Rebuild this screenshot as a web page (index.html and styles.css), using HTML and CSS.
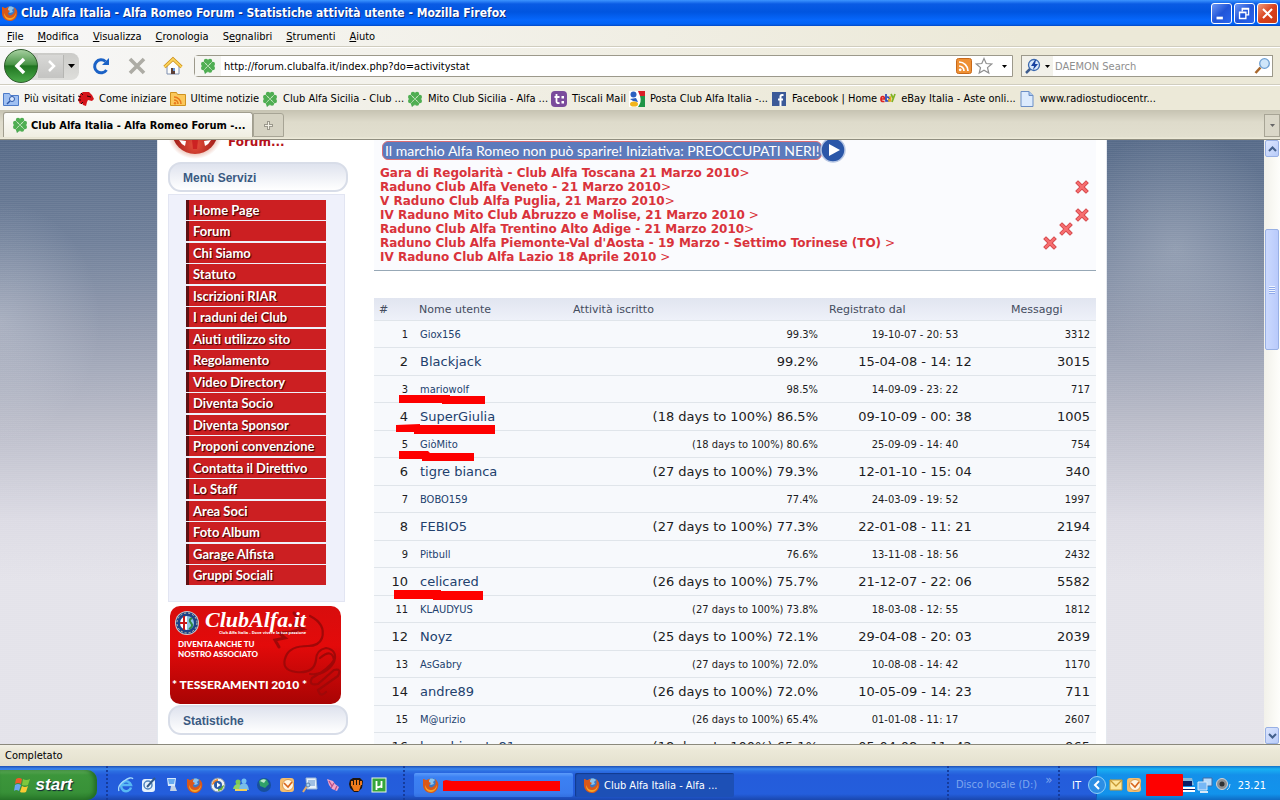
FILE: index.html
```html
<!DOCTYPE html>
<html lang="it">
<head>
    <meta charset="UTF-8">
    <meta name="viewport" content="width=device-width, initial-scale=1.0">
    <title>Club Alfa Italia - Alfa Romeo Forum - Statistiche attività utente</title>
    <link rel="stylesheet" href="styles.css">
</head>
<body>

    <!-- Shared icons -->
    <svg class="sprite" aria-hidden="true">
        <symbol id="firefox" viewBox="0 0 16 16">
            <circle cx="8.5" cy="7" r="6" fill="#3b78c4"/>
            <path d="M5 3c2-2 5-2 7 0l-2 2 1 2-3 1-3-2z" fill="#8cc4ee"/>
            <path d="M1 2c1 1 2 1 3 1 1-1 2-1 3-1-1 1-1 2-1 3l2 1-2 2c0 3 3 3 5 1 2-1 2-4 1-7 3 2 4 5 3 8-1 4-4 6-7 6-5 0-8-4-8-8 0-2 0-4 0-6z" fill="#d9581a"/>
            <path d="M2 8c1 3 3 5 6 5 3 0 5-2 6-5 0 4-3 7-6 7-4 0-6-3-6-7z" fill="#f7a526"/>
        </symbol>
        <symbol id="clover" viewBox="0 0 16 16">
            <path d="M8 8L5 15.500" stroke="#3f9a49" stroke-width="1.400" fill="none"/>
            <g fill="#4fae52">
                <circle cx="6" cy="3" r="2.200"/><circle cx="10" cy="3" r="2.200"/>
                <circle cx="6" cy="12.500" r="2.200"/><circle cx="10" cy="12.500" r="2.200"/>
                <circle cx="3.200" cy="6" r="2.200"/><circle cx="3.200" cy="10" r="2.200"/>
                <circle cx="12.800" cy="6" r="2.200"/><circle cx="12.800" cy="10" r="2.200"/>
                <path d="M5 4h6l-3 4zM5 12h6L8 8zM4 5v6l4-3zM12 5v6L8 8z"/>
            </g>
            <path d="M4 4l8 8M12 4l-8 8" stroke="#cdeac6" stroke-width=".6"/>
        </symbol>
        <symbol id="cross" viewBox="0 0 14 14">
            <path d="M3 3l8 8M11 3l-8 8" stroke="#d2474b" stroke-width="4" stroke-linecap="square"/>
            <path d="M3 3l8 8M11 3l-8 8" stroke="#f76e70" stroke-width="2.400" stroke-linecap="square"/>
        </symbol>
        <symbol id="outlook" viewBox="0 0 16 16">
            <rect x="1" y="1" width="14" height="14" rx="3" fill="#f6bd6c"/>
            <circle cx="9" cy="8" r="5.500" fill="#fff6e2" stroke="#d99a4c"/>
            <path d="M5 6l4 4 4-5" fill="none" stroke="#d8641a" stroke-width="1.600"/>
        </symbol>
    </svg>

    <header class="titlebar">
        <svg class="icon"><use href="#firefox"/></svg>
        <h1>Club Alfa Italia - Alfa Romeo Forum - Statistiche attività utente - Mozilla Firefox</h1>
        <div class="window-buttons">
            <button aria-label="Riduci a icona"><svg viewBox="0 0 21 21"><path d="M5 14h7v3H5z" fill="#fff"/></svg></button>
            <button aria-label="Ripristina"><svg viewBox="0 0 21 21"><path d="M8 8V5h7v7h-3M8 5.500h7M5 9h7v7H5zM5 9.500h7" fill="none" stroke="#fff" stroke-width="1.500"/></svg></button>
            <button class="close-window" aria-label="Chiudi"><svg viewBox="0 0 21 21"><path d="M5.500 5.500l10 10M15.500 5.500l-10 10" stroke="#fff" stroke-width="2.200"/></svg></button>
        </div>
    </header>

    <nav class="menubar">
        <a href="#"><u>F</u>ile</a>
        <a href="#"><u>M</u>odifica</a>
        <a href="#"><u>V</u>isualizza</a>
        <a href="#"><u>C</u>ronologia</a>
        <a href="#">S<u>e</u>gnalibri</a>
        <a href="#"><u>S</u>trumenti</a>
        <a href="#"><u>A</u>iuto</a>
    </nav>

    <div class="toolbar">
        <div class="history">
            <button class="back" aria-label="Indietro"><svg viewBox="0 0 32 32"><path d="M19 9l-7 7 7 7" fill="none" stroke="#fff" stroke-width="3.500"/></svg></button>
            <button class="forward" aria-label="Avanti"><svg viewBox="0 0 25 22"><path d="M11 6l5 5-5 5" fill="none" stroke="#fff" stroke-width="2.500"/></svg></button>
            <button class="recent" aria-label="Pagine recenti"><svg viewBox="0 0 7 4"><path d="M0 0h7L3.500 4z"/></svg></button>
        </div>
        <button class="tool" aria-label="Ricarica"><svg viewBox="0 0 20 20"><path d="M15.500 14a6.500 6.500 0 1 1-1-8.500" fill="none" stroke="#1b62c6" stroke-width="3"/><path d="M18 2v7h-7z" fill="#1b62c6"/></svg></button>
        <button class="tool" aria-label="Ferma"><svg viewBox="0 0 20 20"><path d="M3 3l14 14M17 3L3 17" stroke="#adaca5" stroke-width="3.600"/></svg></button>
        <button class="tool" aria-label="Pagina iniziale"><svg viewBox="0 0 20 20"><path d="M4 10v8h12v-8l-6-6z" fill="#fdfdfb" stroke="#7c8fb0"/><path d="M1.500 11L10 3l8.500 8" fill="none" stroke="#c98a12" stroke-width="3.200"/><path d="M1.500 11L10 3l8.500 8" fill="none" stroke="#fbd35a" stroke-width="1.800"/><path d="M8 12h4v6H8z" fill="#5c4038"/><path d="M10 12h2v3h-2z" fill="#6699dd"/></svg></button>
        <div class="urlbar">
            <span class="site"><svg class="icon"><use href="#clover"/></svg></span>
            <input type="text" value="http://forum.clubalfa.it/index.php?do=activitystat" aria-label="Indirizzo">
            <svg class="icon" viewBox="0 0 16 16"><rect x=".5" y=".5" width="15" height="15" rx="2" fill="#ee9034" stroke="#c8691a"/><path d="M3 4a9 9 0 0 1 9 9M3 8a5 5 0 0 1 5 5" fill="none" stroke="#fff" stroke-width="1.700"/><circle cx="4.200" cy="11.800" r="1.400" fill="#fff"/></svg>
            <svg class="star" viewBox="0 0 18 18"><path d="M9 1.500l2.200 5 5.500.5-4.200 3.600 1.300 5.400L9 13.200 4.200 16l1.300-5.400L1.300 7l5.500-.5z" fill="#fff" stroke="#8f8f8f" stroke-width="1.200"/></svg>
            <button aria-label="Cronologia indirizzi"><svg viewBox="0 0 5 3"><path d="M0 0h5L2.500 3z"/></svg></button>
        </div>
        <div class="search">
            <button class="engine" aria-label="Motore di ricerca"><svg class="icon" viewBox="0 0 16 16"><path d="M6 10l-5 5" stroke="#3e5d8e" stroke-width="2.500"/><circle cx="9" cy="7" r="5.500" fill="#d8e8fa" stroke="#3c69ae" stroke-width="1.300"/><path d="M10 2L6 8h3l-1 4 5-6h-3l1-4z" fill="#1641a0"/></svg><svg class="arrow" viewBox="0 0 5 3"><path d="M0 0h5L2.500 3z"/></svg></button>
            <input type="text" placeholder="DAEMON Search" aria-label="Cerca">
            <button aria-label="Avvia ricerca"><svg class="icon" viewBox="0 0 16 16"><path d="M6.500 9.500L1.500 15" stroke="#a8672c" stroke-width="2.600"/><circle cx="10.500" cy="5.500" r="4.800" fill="#cfe6fa" stroke="#6d9fd2" stroke-width="1.300"/></svg></button>
        </div>
    </div>

    <nav class="bookmarks">
        <a href="#"><svg class="icon" viewBox="0 0 16 16"><path d="M.5 2.500h6l1 2h8v10H.5z" fill="#9fc0f2" stroke="#4c7ac8"/><circle cx="9" cy="8" r="2.500" fill="#dceafd" stroke="#2c56a8"/><path d="M7 10l-3 3" stroke="#2c56a8" stroke-width="1.500"/></svg>Più visitati</a>
        <a href="#"><svg class="icon" viewBox="0 0 16 16"><path d="M2 3l3-2 6 0 3 3 2 4-2 2-4-1-1 2-1 4-3-1-1-2-2 1-1-2-1-2 1-2z" fill="#d5141a"/><path d="M0 5l3 1M0 9l3 0M3 13l2-2M9 5l4 1M3 2l2 2" stroke="#2a0505" stroke-width="1"/></svg>Come iniziare</a>
        <a href="#"><svg class="icon" viewBox="0 0 16 16"><path d="M.5 1.500h6l1 2h8v11H.5z" fill="#fbc85a" stroke="#cf9220"/><path d="M4 6a7 7 0 0 1 7 7M4 9a4 4 0 0 1 4 4" fill="none" stroke="#e8791d" stroke-width="1.600"/><circle cx="5" cy="12.200" r="1.200" fill="#e8791d"/></svg>Ultime notizie</a>
        <a href="#"><svg class="icon"><use href="#clover"/></svg>Club Alfa Sicilia - Club ...</a>
        <a href="#"><svg class="icon"><use href="#clover"/></svg>Mito Club Sicilia - Alfa ...</a>
        <a href="#"><svg class="icon" viewBox="0 0 16 16"><rect width="16" height="16" rx="4" fill="#7a4b9c"/><path d="M5.500 3v7.500q0 2 3 1.500M3.500 6h5" fill="none" stroke="#fff" stroke-width="1.800"/><path d="M10.500 5h2.500v2.500h-2.500zM10.500 10h2.500v2.500h-2.500z" fill="#fff"/></svg>Tiscali Mail</a>
        <a href="#"><svg class="icon" viewBox="0 0 16 16"><path d="M0 0h16v16H0z" fill="#fff"/><path d="M9 0h7v5h-5z" fill="#d91f26"/><path d="M11 5h5v11H9q4-5 2-11z" fill="#1f9547"/><circle cx="4.500" cy="3.500" r="3" fill="#2b5fc0"/><path d="M1 8l6-1 2 4-5-1z" fill="#2b5fc0"/><ellipse cx="5" cy="13" rx="4" ry="2.600" fill="#f2b51c"/></svg>Posta Club Alfa Italia -...</a>
        <a href="#"><svg class="icon" viewBox="0 0 16 16"><rect x="1" y="1" width="14" height="14" fill="#3b5998"/><path d="M12.500 4H11Q9.500 4 9.500 5.500V15M7 8.500h5" fill="none" stroke="#fff" stroke-width="2"/></svg>Facebook | Home</a>
        <a href="#"><svg class="icon" viewBox="0 0 16 16" fill="none" stroke-width="1.700"><path d="M1 8h3.500Q4.500 5.500 2.800 5.500T1 8t2 2.500h1.500" stroke="#d22"/><path d="M6 3v7h1.500Q9.500 10 9.500 8T7 6" stroke="#2743b8"/><path d="M9 8v2h1.500V6H9" stroke="#e4a91a"/><path d="M11 3l2 4M15 3l-3 8" stroke="#7eb324"/></svg>eBay Italia - Aste onli...</a>
        <a href="#"><svg class="icon" viewBox="0 0 16 16"><path d="M2 .500h8l4 4v11H2z" fill="#dcebfd" stroke="#6b8fc6"/><path d="M10 .500v4h4" fill="#a9c7ee" stroke="#6b8fc6"/></svg>www.radiostudiocentr...</a>
    </nav>

    <div class="tabs">
        <button class="tab"><svg class="icon"><use href="#clover"/></svg>Club Alfa Italia - Alfa Romeo Forum -...</button>
        <button class="new-tab" aria-label="Nuova scheda"><svg viewBox="0 0 9 9"><path d="M4.500 0v9M0 4.500h9" stroke="#9b988c" stroke-width="3"/><path d="M4.500 1v7M1 4.500h7" stroke="#f3f1e6" stroke-width="1"/></svg></button>
        <button class="all-tabs" aria-label="Elenca tutte le schede"><svg viewBox="0 0 5 3"><path d="M0 0h5L2.500 3z" fill="#666"/></svg></button>
    </div>

    <div class="viewport">
        <div class="backdrop">
            <div class="page">
                <aside class="sidebar">
                    <svg class="forum-logo" viewBox="0 0 180 20">
                        <defs>
                            <radialGradient id="ball" cx=".5" cy=".8" r=".6"><stop offset="0" stop-color="#e8503c"/><stop offset="1" stop-color="#8d0f10"/></radialGradient>
                            <radialGradient id="glow"><stop offset=".7" stop-color="#e9b9ab"/><stop offset="1" stop-color="#fff"/></radialGradient>
                        </defs>
                        <ellipse cx="27" cy="-5" rx="27" ry="24" fill="url(#glow)"/>
                        <circle cx="27" cy="-9" r="23" fill="url(#ball)"/>
                        <path d="M11 0l7 1-1 5q-4-2-6-6zM43 0l-7 1 1 5q4-2 6-6z" fill="#fff"/>
                        <path d="M24 0h6l-1 9h-4z" fill="#c22"/>
                        <text x="60" y="6" class="forum-text">Forum...</text>
                    </svg>
                    <h2 class="pill">Menù Servizi</h2>
                    <ul class="menu">
                        <li><a href="#">Home Page</a></li>
                        <li><a href="#">Forum</a></li>
                        <li><a href="#">Chi Siamo</a></li>
                        <li><a href="#">Statuto</a></li>
                        <li><a href="#">Iscrizioni RIAR</a></li>
                        <li><a href="#">I raduni dei Club</a></li>
                        <li><a href="#">Aiuti utilizzo sito</a></li>
                        <li><a href="#">Regolamento</a></li>
                        <li><a href="#">Video Directory</a></li>
                        <li><a href="#">Diventa Socio</a></li>
                        <li><a href="#">Diventa Sponsor</a></li>
                        <li><a href="#">Proponi convenzione</a></li>
                        <li><a href="#">Contatta il Direttivo</a></li>
                        <li><a href="#">Lo Staff</a></li>
                        <li><a href="#">Area Soci</a></li>
                        <li><a href="#">Foto Album</a></li>
                        <li><a href="#">Garage Alfista</a></li>
                        <li><a href="#">Gruppi Sociali</a></li>
                    </ul>
                    <a href="#" class="member-card">
                        <svg viewBox="0 0 171 98">
                            <defs>
                                <linearGradient id="card" x1="0" y1="0" x2="0" y2="1"><stop offset="0" stop-color="#d80d0d"/><stop offset=".4" stop-color="#e30a0a"/><stop offset="1" stop-color="#a80404"/></linearGradient>
                            </defs>
                            <rect width="171" height="98" rx="10" fill="url(#card)"/>
                            <g fill="none" stroke="#a00808" stroke-linecap="round">
                                <path d="M124 7l5 6-5 6 9 4-12 3-12 1 6 5-10 2 4 7" stroke-width="3"/>
                                <path d="M140 10q16 8 12 22-3 8-14 8-18 0-22 10-6 14 10 16 18 2 20-12 0-10 10-12 12 2 8 14-8 14-24 12" stroke-width="2.200"/>
                                <path d="M150 52q12-10 14 2-4 8-22 18-4 8 6 6l16-14q8-2 4 6l-20 14q2 8 8 2" stroke-width="2.200"/>
                            </g>
                            <circle cx="17" cy="17" r="12" fill="#c8ccd0"/>
                            <circle cx="17" cy="17" r="11" fill="#1e4288"/>
                            <circle cx="17" cy="17" r="10" fill="none" stroke="#d8d2a8" stroke-dasharray="2 2"/>
                            <path d="M17 10a7 7 0 0 0 0 14z" fill="#fff"/><path d="M17 10a7 7 0 0 1 0 14z" fill="#8cc3e4"/>
                            <path d="M14 10v14M10 17h7" stroke="#c81818" stroke-width="2"/>
                            <path d="M22 12q-4 2-1 5t-2 6" stroke="#2f8b45" stroke-width="2" fill="none"/>
                            <text x="35" y="21" class="card-logo">ClubAlfa.it</text>
                            <text x="49" y="28" class="card-tag">Club Alfa Italia - Dove vivere la tua passione</text>
                            <text x="8" y="41" class="card-text">DIVENTA ANCHE TU</text>
                            <text x="8" y="51" class="card-text">NOSTRO ASSOCIATO</text>
                            <text x="2" y="83" class="card-title">* TESSERAMENTI 2010 *</text>
                        </svg>
                    </a>
                    <h2 class="pill">Statistiche</h2>
                </aside>

                <main class="content">
                    <section class="news">
                        <a href="#" class="campaign"><span>Il marchio Alfa Romeo non può sparire! Iniziativa: PREOCCUPATI NERI!</span><svg viewBox="0 0 26 26"><circle cx="13" cy="13" r="12" fill="#2b57a8" stroke="#b9c8e4" stroke-width="1.500"/><path d="M9 7v12l11-6z" fill="#fff"/></svg></a>
                        <ul>
                            <li><a href="#">Gara di Regolarità - Club Alfa Toscana 21 Marzo 2010</a>&gt;</li>
                            <li><a href="#">Raduno Club Alfa Veneto - 21 Marzo 2010</a>&gt;<button aria-label="Chiudi avviso"><svg><use href="#cross"/></svg></button></li>
                            <li><a href="#">V Raduno Club Alfa Puglia, 21 Marzo 2010</a>&gt;</li>
                            <li><a href="#">IV Raduno Mito Club Abruzzo e Molise, 21 Marzo 2010</a>&nbsp;&gt;<button aria-label="Chiudi avviso"><svg><use href="#cross"/></svg></button></li>
                            <li class="step-one"><a href="#">Raduno Club Alfa Trentino Alto Adige - 21 Marzo 2010</a>&gt;<button aria-label="Chiudi avviso"><svg><use href="#cross"/></svg></button></li>
                            <li class="step-two"><a href="#">Raduno Club Alfa Piemonte-Val d'Aosta - 19 Marzo - Settimo Torinese (TO)</a>&nbsp;&gt;<button aria-label="Chiudi avviso"><svg><use href="#cross"/></svg></button></li>
                            <li><a href="#">IV Raduno Club Alfa Lazio 18 Aprile 2010</a>&nbsp;&gt;</li>
                        </ul>
                    </section>

                    <div class="stats">
                        <table>
                            <thead>
                                <tr><th class="rank">#</th><th class="name">Nome utente</th><th class="activity">Attività iscritto</th><th class="date">Registrato dal</th><th class="posts">Messaggi</th></tr>
                            </thead>
                            <tbody>
                                <tr><td>1</td><td><a href="#">Giox156</a></td><td>99.3%</td><td>19-10-07 - 20: 53</td><td>3312</td></tr>
                                <tr><td>2</td><td><a href="#">Blackjack</a></td><td>99.2%</td><td>15-04-08 - 14: 12</td><td>3015</td></tr>
                                <tr><td>3</td><td><a href="#">mariowolf</a></td><td>98.5%</td><td>14-09-09 - 23: 22</td><td>717</td></tr>
                                <tr><td>4</td><td><a href="#">SuperGiulia</a></td><td>(18 days to 100%) 86.5%</td><td>09-10-09 - 00: 38</td><td>1005</td></tr>
                                <tr><td>5</td><td><a href="#">GiòMito</a></td><td>(18 days to 100%) 80.6%</td><td>25-09-09 - 14: 40</td><td>754</td></tr>
                                <tr><td>6</td><td><a href="#">tigre bianca</a></td><td>(27 days to 100%) 79.3%</td><td>12-01-10 - 15: 04</td><td>340</td></tr>
                                <tr><td>7</td><td><a href="#">BOBO159</a></td><td>77.4%</td><td>24-03-09 - 19: 52</td><td>1997</td></tr>
                                <tr><td>8</td><td><a href="#">FEBIO5</a></td><td>(27 days to 100%) 77.3%</td><td>22-01-08 - 11: 21</td><td>2194</td></tr>
                                <tr><td>9</td><td><a href="#">Pitbull</a></td><td>76.6%</td><td>13-11-08 - 18: 56</td><td>2432</td></tr>
                                <tr><td>10</td><td><a href="#">celicared</a></td><td>(26 days to 100%) 75.7%</td><td>21-12-07 - 22: 06</td><td>5582</td></tr>
                                <tr><td>11</td><td><a href="#">KLAUDYUS</a></td><td>(27 days to 100%) 73.8%</td><td>18-03-08 - 12: 55</td><td>1812</td></tr>
                                <tr><td>12</td><td><a href="#">Noyz</a></td><td>(25 days to 100%) 72.1%</td><td>29-04-08 - 20: 03</td><td>2039</td></tr>
                                <tr><td>13</td><td><a href="#">AsGabry</a></td><td>(27 days to 100%) 72.0%</td><td>10-08-08 - 14: 42</td><td>1170</td></tr>
                                <tr><td>14</td><td><a href="#">andre89</a></td><td>(26 days to 100%) 72.0%</td><td>10-05-09 - 14: 23</td><td>711</td></tr>
                                <tr><td>15</td><td><a href="#">M@urizio</a></td><td>(26 days to 100%) 65.4%</td><td>01-01-08 - 11: 17</td><td>2607</td></tr>
                                <tr><td>16</td><td><a href="#">bacchinesto81</a></td><td>(18 days to 100%) 65.1%</td><td>05-04-08 - 11: 42</td><td>965</td></tr>
                            </tbody>
                        </table>
                        <!-- Pen strokes over the highlighted users -->
                        <svg class="marks" viewBox="0 0 140 310">
                            <path d="M25 97h51v1h35v8H68v-1H25zM22 127l24-1v1h75v9H40v-2H22zM25 153h29l2 2h44v8H48v-2H25zM20 292h47v1h42v9H59v-1H20z" fill="#fe0000"/>
                        </svg>
                    </div>
                </main>
            </div>
        </div>
        <div class="scrollbar">
            <button aria-label="Su"><svg viewBox="0 0 9 6"><path d="M1 5l3.500-3.500L8 5" fill="none" stroke="#43608c" stroke-width="2"/></svg></button>
            <div class="track-top"></div>
            <div class="thumb"></div>
            <div class="track-bottom"></div>
            <button aria-label="Giù"><svg viewBox="0 0 9 6"><path d="M1 1l3.500 3.500L8 1" fill="none" stroke="#43608c" stroke-width="2"/></svg></button>
        </div>
    </div>

    <div class="statusbar">Completato</div>

    <footer class="taskbar">
        <button class="start">
            <svg viewBox="0 0 18 18"><path d="M3 3q3-2 6 0L8 8q-3-2-6 0z" fill="#ee5a2a"/><path d="M10 3q3 2 7 0l-2 6q-3 1-6 0z" fill="#7ec83e"/><path d="M2 9q3-2 6 0l-2 6q-3-2-5 0z" fill="#6ba5f2"/><path d="M9 10q3 2 6 0l-2 6q-3 1-6 0z" fill="#fbcb33"/></svg>
            start
        </button>
        <div class="quick-launch">
            <svg class="icon" viewBox="0 0 16 16"><path d="M13 10.500A5 5 0 1 1 13 8H4" fill="none" stroke="#58b9f4" stroke-width="2.500"/><path d="M1 14Q-1 9 6 4t9-2" fill="none" stroke="#a5dbfb" stroke-width="1.300"/></svg>
            <svg class="icon" viewBox="0 0 16 16"><rect x="1" y="2" width="13" height="13" rx="3" fill="#e6f2fd"/><circle cx="7" cy="8" r="4" fill="none" stroke="#5185bf" stroke-width="1.500"/><path d="M14 1L6 10" stroke="#345b88" stroke-width="2"/></svg>
            <svg class="icon" viewBox="0 0 16 16"><path d="M3 1h9l-1 8H4z" fill="#d7eafe"/><path d="M4 2h7l-1 5H5z" fill="#68abf0"/><path d="M7 9h4l2 5H6z" fill="#c3d2e6"/></svg>
            <svg class="icon"><use href="#firefox"/></svg>
            <svg class="icon" viewBox="0 0 16 16"><circle cx="8" cy="8" r="7" fill="#eef1f5" stroke="#7890ab"/><path d="M2 8a6 6 0 0 1 6-6v3z" fill="#f0862a"/><path d="M14 8a6 6 0 0 1-6 6v-3z" fill="#69b437"/><circle cx="8" cy="8" r="4" fill="#2b5ca8"/><path d="M7 5.500v5L10.500 8z" fill="#fff"/></svg>
            <svg class="icon" viewBox="0 0 16 16"><circle cx="5" cy="5" r="2.500" fill="#7bc857"/><circle cx="11" cy="4" r="2.500" fill="#73bff2"/><path d="M0 12q1-5 5-5t5 5z" fill="#8fd364"/><path d="M6 12q1-6 5-6t5 7z" fill="#78bde9"/><path d="M2 13h12" stroke="#f4cf55" stroke-width="2"/></svg>
            <svg class="icon" viewBox="0 0 16 16"><circle cx="8" cy="8" r="7" fill="#174f9c"/><path d="M3 4q4-4 8-1l2 4-4 4-5-2z" fill="#2fa06a"/><path d="M4 4q3-3 6-1l-2 3z" fill="#bdeacb"/></svg>
            <svg class="icon"><use href="#outlook"/></svg>
            <svg class="icon" viewBox="0 0 16 16"><path d="M4 1h10l1 11H5z" fill="#e8f2fb" stroke="#9db7d5"/><path d="M6 4h7M6 6h7M6 8h7" stroke="#588ccb"/><path d="M5 9l-4 6" stroke="#dfab6a" stroke-width="2"/><circle cx="6" cy="8" r="2" fill="#a7d2f6" stroke="#5c82ac"/></svg>
            <svg class="icon" viewBox="0 0 16 16"><path d="M2 2l6 2 2 3 4 3-2 4-5-2-3-4z" fill="#f1a5c9"/><path d="M4 4l3 5M9 6l-3 5M12 9l-2 4" stroke="#b5508c" stroke-width="1.300"/></svg>
            <svg class="icon" viewBox="0 0 16 16"><path d="M2 3l3-2h7l3 3-1 7-4 4H6l-4-4-1-4z" fill="#20150c"/><path d="M3 4h2v5H3zM6 3h2v6H6zM9 3h2v6H9zM12 4h2v4h-2zM3 8h10l-2 6H6z" fill="#ef7a1c"/></svg>
            <svg class="icon" viewBox="0 0 16 16"><rect x="1" y="1" width="14" height="14" fill="#35a53b" stroke="#e9f5e5"/><path d="M5.500 4v9M5.500 9q1 2.500 4.500 0M10.500 4v7" fill="none" stroke="#fff" stroke-width="1.800"/></svg>
        </div>
        <div class="windows">
            <button class="window" aria-label="Finestra Firefox"><svg class="icon"><use href="#firefox"/></svg><svg class="blot" viewBox="0 0 117 11"><path d="M0 1l3-1 6 1h108v10H0z" fill="#fe0000"/></svg></button>
            <button class="window active"><svg class="icon"><use href="#firefox"/></svg>Club Alfa Italia - Alfa ...</button>
        </div>
        <div class="deskband">Disco locale (D:)<span>»</span></div>
        <div class="language">IT</div>
        <div class="tray">
            <button aria-label="Mostra icone nascoste"><svg viewBox="0 0 18 18"><circle cx="9" cy="9" r="8.500" fill="#2c8ee4" stroke="#8fd0f7"/><path d="M11 5L7 9l4 4" fill="none" stroke="#fff" stroke-width="2"/></svg></button>
            <svg class="icon" viewBox="0 0 16 16"><path d="M2 3h12v10H2z" fill="#fde79b" stroke="#c79a34"/><path d="M2 3l6 6 6-6" fill="none" stroke="#c79a34" stroke-width="1.300"/></svg>
            <svg class="icon"><use href="#outlook"/></svg>
            <svg class="redacted" viewBox="0 0 37 22"><rect width="37" height="22" rx="1" fill="#fe0000"/></svg>
            <svg class="icon narrow" viewBox="0 0 12 16"><path d="M0 1h9l2 7H0z" fill="#89b8d8"/><path d="M0 4h9v5H0z" fill="#0c1e65"/><path d="M0 10h12v2H0zM0 13h12v2H0z" fill="#fff"/><path d="M0 12h12v1H0z" fill="#0c1e65"/></svg>
            <svg class="icon" viewBox="0 0 16 16"><path d="M6 1h9v8H6z" fill="#b8dcfb" stroke="#3f6ca8"/><path d="M1 5h9v8H1z" fill="#77b8f5" stroke="#d8e9f8"/><path d="M3 15h8" stroke="#d8e9f8" stroke-width="2"/></svg>
            <svg class="icon" viewBox="0 0 16 16"><circle cx="7" cy="7" r="5.500" fill="#8d8f92" stroke="#d1d3d6"/><circle cx="7" cy="7" r="2.500" fill="#2e3033"/><path d="M12 13q3-2 3-6" fill="none" stroke="#b9dcf6"/></svg>
            <time>23.21</time>
        </div>
    </footer>

</body>
</html>
```
FILE: styles.css
```css
* {
    box-sizing: border-box;
}
body {
    margin: 0;
    height: 100vh;
    display: flex;
    flex-direction: column;
    overflow: hidden;
    background-color: #ece9d8;
    color: #000;
    font-family: "DejaVu Sans Condensed", "DejaVu Sans", sans-serif;
    font-size: 11px;
}
a {
    color: inherit;
    text-decoration: none;
}
button {
    display: flex;
    align-items: center;
    justify-content: center;
    padding: 0;
    border: none;
    background: none;
    color: inherit;
    font: inherit;
}
input {
    min-width: 0;
    flex: 1;
    padding: 0;
    border: none;
    outline: none;
    background: none;
    font: inherit;
}
ul {
    margin: 0;
    padding: 0;
    list-style: none;
}
.sprite {
    position: absolute;
    width: 0;
    height: 0;
}
.icon {
    width: 16px;
    height: 16px;
    flex: none;
}

/* Window frame */
.titlebar {
    display: flex;
    align-items: center;
    height: 26px;
    padding: 0 2px;
    flex: none;
    background: linear-gradient(#3d95ff 0, #0a5be4 4px, #0055e0 12px, #0667fc 20px, #0263f5 24px, #0448c4);
}
.titlebar h1 {
    flex: 1;
    margin: 0 0 0 3px;
    color: #fff;
    font-size: 12px;
    line-height: 26px;
    white-space: nowrap;
    text-shadow: 1px 1px #0b2a80;
}
.window-buttons {
    display: flex;
    gap: 2px;
}
.window-buttons button {
    width: 21px;
    height: 21px;
    border: 1px solid #fff;
    border-radius: 3px;
    background: linear-gradient(135deg, #6d97f4, #2155d8 50%, #2a66ee);
}
.window-buttons .close-window {
    background: linear-gradient(135deg, #f09a7c, #d9411c 50%, #c83a18);
}
.menubar {
    display: flex;
    gap: 14px;
    height: 21px;
    padding: 0 7px;
    flex: none;
    line-height: 21px;
    background: linear-gradient(90deg, #f7f7f7, #ece9d8 80%);
    border-bottom: 1px solid #d0cdbf;
}
.toolbar {
    display: flex;
    align-items: center;
    gap: 16px;
    height: 38px;
    padding: 0 7px 0 4px;
    flex: none;
    background: linear-gradient(90deg, #f7f7f7, #ece9d8 80%);
    border-top: 1px solid #fff;
    border-bottom: 1px solid #d0cdbf;
}
.history {
    display: flex;
    align-items: center;
    height: 27px;
    margin-right: -4px;
    border-radius: 14px 8px 8px 14px;
    background: linear-gradient(#cbcbc8, #dededb);
}
.back {
    width: 34px;
    height: 34px;
    border: 1px solid #2e5b2c;
    border-radius: 50%;
    background: linear-gradient(#a5cf9f, #4b9548 45%, #1f7520 50%, #4ba94a);
}
.back svg {
    width: 32px;
}
.forward {
    width: 26px;
    height: 23px;
    border-right: 1px solid #b5b5b2;
    background: linear-gradient(#d8d8d6, #c4c4c2);
}
.forward svg {
    width: 25px;
}
.recent {
    width: 15px;
    height: 23px;
}
.recent svg {
    width: 7px;
}
.tool svg {
    width: 20px;
    height: 20px;
}
.urlbar,
.search {
    display: flex;
    align-items: center;
    height: 22px;
    border: 1px solid #9c998b;
    background-color: #fff;
}
.urlbar {
    flex: 1;
    gap: 3px;
    margin-left: -5px;
    border-radius: 4px 0 0 4px;
}
.urlbar button {
    width: 16px;
}
.site {
    display: flex;
    align-items: center;
    height: 20px;
    padding: 0 5px;
    background-color: #f5f5f1;
}
.star {
    width: 18px;
    height: 18px;
}
.urlbar button svg,
.arrow,
.all-tabs svg {
    width: 5px;
    height: 3px;
}
.search {
    flex: 0 1 252px;
    margin-left: -8px;
    padding-right: 2px;
}
.search input {
    padding-left: 2px;
}
.search input::placeholder {
    color: #8e8e8e;
}
.engine {
    gap: 4px;
    height: 20px;
    padding: 0 3px;
    background-color: #f2f1ea;
}
.bookmarks {
    display: flex;
    align-items: center;
    gap: 3px;
    height: 25px;
    padding: 1px 3px 0;
    flex: none;
    overflow: hidden;
    white-space: nowrap;
    background: linear-gradient(90deg, #f5f5f3, #ece9d8 70%);
    border-top: 1px solid #fff;
}
.bookmarks a {
    display: flex;
    align-items: center;
    gap: 5px;
}
.tabs {
    display: flex;
    align-items: flex-end;
    height: 30px;
    padding: 0 0 2px 3px;
    flex: none;
    background: linear-gradient(#c6c3b2, #dedbcb 12px, #e2dfcf 27px, #ece9d8 28px);
    border-bottom: 1px solid #908e80;
}
.tab {
    gap: 3px;
    width: 250px;
    height: 25px;
    justify-content: flex-start;
    padding-left: 8px;
    border: 1px solid #a19e8f;
    border-bottom: none;
    border-radius: 3px 3px 0 0;
    background: linear-gradient(#fdfdfb, #f0eee2);
    font-weight: bold;
    white-space: nowrap;
}
.new-tab {
    width: 31px;
    height: 24px;
    border: 1px solid #a7a495;
    border-radius: 0 3px 0 0;
    background-color: #d5d2c2;
}
.new-tab svg {
    width: 9px;
}
.all-tabs {
    width: 16px;
    height: 23px;
    margin-left: auto;
    border: 1px solid #a7a495;
    background-color: #dad7c8;
}

/* Forum page */
.viewport {
    display: flex;
    flex: 1;
    min-height: 0;
}
.backdrop {
    flex: 1;
    min-width: 0;
    overflow: hidden;
    background:
        repeating-linear-gradient(rgba(255, 255, 255, 0.06) 0 1px, transparent 1px 2px),
        radial-gradient(ellipse 110px 120px at 93% 18%, rgba(200, 205, 215, 0.35), transparent),
        radial-gradient(ellipse 100px 120px at 0 30%, rgba(220, 222, 230, 0.3), transparent),
        linear-gradient(#566a88, #6f7f99 100px, #9099ad 180px, #b9bbc8 280px, #dcdbe4 380px, #e4e3ea 440px);
}
.page {
    display: flex;
    gap: 26px;
    max-width: 950px;
    min-height: 100%;
    margin: 0 auto;
    padding: 0 10px;
    background-color: #fff;
    border-left: 1px solid #e4e8ee;
    border-right: 1px solid #e4e8ee;
}
.sidebar {
    width: 180px;
    flex: none;
}
.forum-logo {
    display: block;
    width: 180px;
    height: 20px;
    margin-bottom: 2px;
}
.forum-text {
    fill: #b5121b;
    font-family: "DejaVu Sans", sans-serif;
    font-size: 12px;
    font-weight: bold;
}
.pill {
    height: 30px;
    margin: 0;
    padding-left: 13px;
    border: 2px solid #d8dde8;
    border-radius: 13px;
    background: linear-gradient(#dfe3ee, #fff);
    color: #3a5a82;
    font-family: "Liberation Sans", Arial, sans-serif;
    font-size: 12px;
    line-height: 28px;
}
.menu {
    width: 177px;
    margin-top: 2px;
    padding: 5px 18px 14px 17px;
    border: 1px solid #e2e5f2;
    background-color: #eff1fb;
}
.menu li {
    height: 20px;
    margin-bottom: 1px;
    padding-left: 4px;
    border-left: 3px solid #5e1214;
    background-color: #cc1f22;
}
.menu li:nth-child(even) {
    margin-bottom: 2px;
}
.menu a {
    display: block;
    color: #fff;
    font-family: Lato, sans-serif;
    font-size: 13px;
    font-weight: bold;
    line-height: 21px;
    white-space: nowrap;
    text-shadow: 1px 1px 1px #300;
}
.member-card {
    display: block;
    margin: 4px 0 1px 2px;
}
.member-card svg {
    display: block;
    width: 171px;
}
.member-card text {
    fill: #fff;
    font-family: Lato, sans-serif;
    font-weight: 900;
}
.member-card .card-logo {
    font-family: "Liberation Serif", serif;
    font-size: 22px;
    font-style: italic;
    font-weight: bold;
}
.member-card .card-tag {
    font-family: "Open Sans", sans-serif;
    font-size: 4px;
    font-weight: bold;
}
.member-card .card-text {
    font-size: 8px;
}
.member-card .card-title {
    font-size: 12px;
}
.content {
    flex: 1;
    min-width: 0;
}
.news {
    padding: 0 6px 6px;
    border-bottom: 1px solid #97a8b6;
    background-color: #fafbfe;
    font-family: "DejaVu Sans", sans-serif;
    font-size: 12px;
    line-height: 14px;
}
.campaign {
    display: flex;
    align-items: center;
    height: 20px;
    margin: 0 0 6px 2px;
    color: #fff;
    font-family: Lato, sans-serif;
    font-size: 14px;
    white-space: nowrap;
}
.campaign span {
    padding: 0 2px;
    border: 1px solid #dd6d72;
    border-radius: 6px;
    background-color: #5c7abc;
    line-height: 17px;
}
.campaign svg {
    width: 26px;
    height: 26px;
    margin-left: -2px;
}
.news ul {
    color: #d9333b;
}
.news li {
    display: flex;
    height: 14px;
}
.news li a {
    font-weight: bold;
    white-space: nowrap;
}
.news li button {
    margin: 0 1px 0 auto;
}
.news .step-one button {
    margin-right: 17px;
}
.news .step-two button {
    margin-right: 33px;
}
.news li svg {
    width: 14px;
    height: 14px;
}
.stats {
    position: relative;
    margin-top: 27px;
}
.stats table {
    width: 100%;
    table-layout: fixed;
    border-collapse: collapse;
}
.stats th {
    height: 22px;
    padding: 1px 5px 0;
    background: linear-gradient(#e1e5f0, #eef1f9);
    color: #444c5e;
    font-family: "DejaVu Sans", sans-serif;
    font-weight: normal;
    text-align: left;
}
.stats .rank {
    width: 40px;
}
.stats .name {
    width: 154px;
}
.stats .date {
    width: 182px;
}
.stats .posts {
    width: 90px;
}
.stats td {
    height: 27px;
    padding: 1px 6px 0;
    border-top: 1px solid #e0e5ea;
    background-color: #f7f9fc;
    color: #1c1c22;
    text-align: right;
    white-space: nowrap;
}
.stats tr:nth-child(even) td {
    height: 28px;
    font-family: "DejaVu Sans", sans-serif;
    font-size: 13px;
}
.stats td:nth-child(2) {
    color: #22416e;
    text-align: left;
}
.stats td:nth-child(4) {
    text-align: center;
}
.marks {
    position: absolute;
    top: 0;
    left: 0;
    width: 140px;
    height: 310px;
}
.scrollbar {
    display: flex;
    flex-direction: column;
    width: 16px;
    flex: none;
    background: linear-gradient(90deg, #f2f1ea, #fefefb);
}
.scrollbar button {
    height: 17px;
    margin: 0 1px;
    flex: none;
    border: 1px solid #98b0e4;
    border-radius: 2px;
    background: linear-gradient(135deg, #dbe5fe, #b9ccf9);
}
.scrollbar svg {
    width: 9px;
}
.track-top {
    flex: 72;
}
.track-bottom {
    flex: 378;
}
.thumb {
    flex: 120;
    margin: 0 1px;
    border: 1px solid #98b0e4;
    border-radius: 2px;
    background:
        repeating-linear-gradient(#eef4fe 0 1px, #8fa9ea 1px 2px) center / 6px 8px no-repeat,
        linear-gradient(90deg, #cbd9fe, #b9cafb);
}

/* Status and task bars */
.statusbar {
    height: 22px;
    padding-left: 5px;
    flex: none;
    border-top: 1px solid #8b897c;
    background: linear-gradient(#f3f1e6, #ece9d8 5px, #e4e0ce);
    line-height: 21px;
}
.taskbar {
    display: flex;
    height: 34px;
    flex: none;
    background: linear-gradient(#1e4fb4 0, #3b87ee 3px, #2c6fe2 5px, #245cdb 9px, #245edc 28px, #1a47ae);
    color: #fff;
}
.start {
    gap: 5px;
    width: 97px;
    margin-top: 4px;
    padding-right: 12px;
    border-radius: 0 10px 10px 0;
    background: linear-gradient(#67b360, #3c963b 5px, #389138 22px, #2a7a2b);
    box-shadow: inset -3px 0 4px #226b25;
    font-family: "Liberation Sans", Arial, sans-serif;
    font-size: 17px;
    font-style: italic;
    font-weight: bold;
    text-shadow: 1px 1px 1px #123;
}
.start svg {
    width: 18px;
}
.quick-launch {
    display: flex;
    align-items: center;
    gap: 7px;
    padding: 4px 16px 0 12px;
    margin-left: 9px;
}
.quick-launch,
.windows,
.deskband,
.language {
    background: radial-gradient(circle at 1px 1px, #163c9c 1px, transparent 1px) 0 12px / 4px 4px repeat-y;
}
.windows {
    display: flex;
    gap: 2px;
    flex: 1;
    padding: 7px 0 3px 11px;
}
.window {
    justify-content: flex-start;
    gap: 4px;
    flex: 0 1 159px;
    min-width: 0;
    padding-left: 9px;
    border-radius: 2px;
    background: linear-gradient(#5c9bfb, #3c81f3 4px, #3a7bee 20px, #3370e0);
    white-space: nowrap;
}
.window.active {
    background: #1d50b6;
    box-shadow: inset 1px 1px 1px #123a8d;
}
.blot {
    width: 117px;
}
.deskband {
    display: flex;
    gap: 8px;
    width: 111px;
    padding-left: 9px;
    line-height: 38px;
    color: #7ea6ee;
    white-space: nowrap;
}
.deskband span {
    font-size: 13px;
    line-height: 28px;
}
.language {
    width: 38px;
    padding-left: 14px;
    line-height: 40px;
}
.tray {
    display: flex;
    align-items: center;
    gap: 2px;
    width: 184px;
    padding: 4px 14px 0 0;
    border-left: 1px solid #0f5cb8;
    background: linear-gradient(#1471c8 0, #19b1f3 3px, #1490ea 9px, #1293ec 28px, #0f6cc4);
}
.tray button {
    margin-left: -9px;
}
.tray button svg {
    width: 18px;
}
.redacted {
    width: 37px;
    height: 22px;
    margin-left: 2px;
}
.icon.narrow {
    width: 12px;
    margin-left: -2px;
}
.tray time {
    margin-left: auto;
}
```
